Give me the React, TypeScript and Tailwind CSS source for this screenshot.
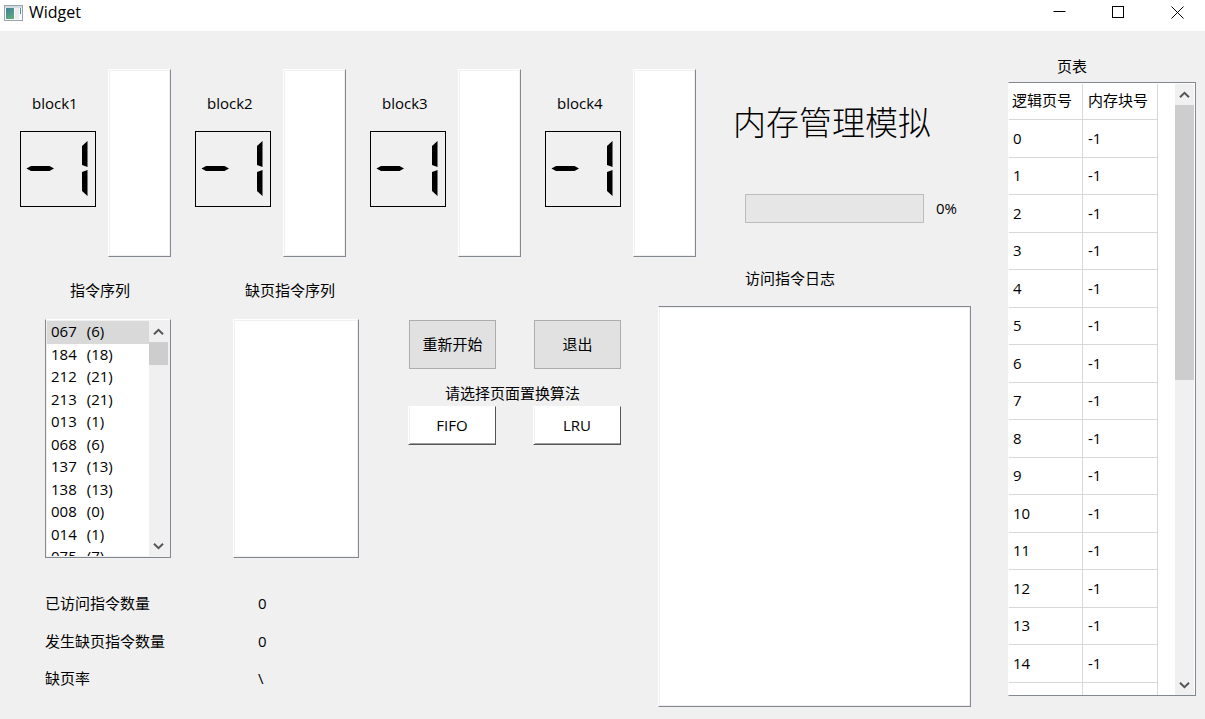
import React from "react";

const instructions: [string, string][] = [
  ["067", "(6)"],
  ["184", "(18)"],
  ["212", "(21)"],
  ["213", "(21)"],
  ["013", "(1)"],
  ["068", "(6)"],
  ["137", "(13)"],
  ["138", "(13)"],
  ["008", "(0)"],
  ["014", "(1)"],
  ["075", "(7)"],
];

const pages = Array.from({ length: 15 }, (_, page) => ({ page, block: -1 }));

const stats = [
  { label: "已访问指令数量", value: "0", row: "h-[38px]" },
  { label: "发生缺页指令数量", value: "0", row: "h-[37px]" },
  { label: "缺页率", value: "\\", row: "h-9" },
];

function Chevron({ up = false }: { up?: boolean }) {
  return (
    <svg width="11" height="8" viewBox="0 0 11 8" fill="none" stroke="#555" strokeWidth="2" aria-hidden="true">
      <path d={up ? "M1 6.2 5.5 1.8 10 6.2" : "M1 1.8 5.5 6.2 10 1.8"} />
    </svg>
  );
}

function ScrollBar({ thumb }: { thumb: string }) {
  return (
    <div className="flex w-[19px] shrink-0 flex-col bg-[#f0f0f0]">
      <button type="button" aria-label="向上滚动" className="flex h-[21px] items-center justify-center">
        <Chevron up />
      </button>
      <div className="flex-1">
        <div className={`bg-[#cdcdcd] ${thumb}`} />
      </div>
      <button type="button" aria-label="向下滚动" className="flex h-[21px] items-center justify-center">
        <Chevron />
      </button>
    </div>
  );
}

function EmptyList({ label, size }: { label: string; size: string }) {
  return (
    <div className={`border border-b-[#828790] border-l-white border-r-[#828790] border-t-white ${size}`}>
      <ul aria-label={label} className="h-full border border-[#f0f0f0] bg-white" />
    </div>
  );
}

function Lcd() {
  return (
    <svg width="76" height="76" viewBox="0 0 76 76" role="img" aria-label="-1">
      <rect x="0.5" y="0.5" width="75" height="75" fill="none" stroke="#000" />
      <path d="M6.5 37.5 11 35h18.500l4.500 2.500-4.500 2.500H11z" />
      <path d="M62 15 67.500 10v26L62 34z" />
      <path d="M62 41 67.500 39v26L62 60z" />
      <path d="M67.500 10.500v25M67.500 39.500v25" stroke="#777" />
    </svg>
  );
}

function Block({ index }: { index: number }) {
  return (
    <section className="flex shrink-0 gap-3">
      <div className="w-[76px] pt-6">
        <h2 className="mb-[17px] pl-3 leading-[21px]">block{index}</h2>
        <Lcd />
      </div>
      <EmptyList label={`block${index}`} size="h-[188px] w-[63px]" />
    </section>
  );
}

const toolButton = "h-[49px] flex-1 border border-[#adadad] bg-[#e1e1e1]";
const choiceButton =
  "h-[39px] flex-1 border border-b-[#555] border-l-white border-r-[#555] border-t-white bg-white shadow-[inset_1px_0_0_#f0f0f0,inset_0_-1px_0_#a0a0a0]";

export default function App() {
  return (
    <div className="flex h-screen min-h-[719px] min-w-[1180px] flex-col bg-[#f0f0f0] font-['Open_Sans','Noto_Sans_CJK_SC',sans-serif] text-[15px] leading-[21px] text-black">
      <header className="flex h-[31px] shrink-0 justify-between bg-white">
        <div className="flex items-center gap-[6px] pb-[6px] pl-1">
          <svg width="19" height="16" viewBox="0 0 19 16" aria-hidden="true">
            <defs>
              <linearGradient id="pane" x1="0" y1="0" x2="0.6" y2="1">
                <stop offset="0" stopColor="#3f7f9f" />
                <stop offset="1" stopColor="#5cab78" />
              </linearGradient>
            </defs>
            <rect x="0.5" y="0.5" width="18" height="15" fill="#fbfbfb" stroke="#9aa3aa" />
            <rect x="1" y="1" width="17" height="2" fill="#d5dbe2" />
            <rect x="2" y="3" width="8" height="11" fill="url(#pane)" />
            <rect x="11" y="3" width="4" height="11" fill="#ececf0" />
            <rect x="16" y="3" width="1" height="6" fill="#4795a0" />
          </svg>
          <h1 className="text-base leading-[21px]">Widget</h1>
        </div>
        <div className="flex h-6 items-center gap-10 pr-[18px]">
          <button type="button" aria-label="最小化" className="flex size-[19px] items-center justify-center">
            <svg width="13" height="13" viewBox="0 0 13 13" stroke="#000" fill="none"><path d="M0.500 5.500h12" /></svg>
          </button>
          <button type="button" aria-label="最大化" className="flex size-[19px] items-center justify-center">
            <svg width="13" height="13" viewBox="0 0 13 13" stroke="#000" fill="none"><rect x="0.500" y="0.500" width="11" height="11" /></svg>
          </button>
          <button type="button" aria-label="关闭" className="flex size-[19px] items-center justify-center">
            <svg width="13" height="13" viewBox="0 0 13 13" stroke="#000" fill="none"><path d="M0.500 0.500 12.500 12.500M12.500 0.500 0.500 12.500" /></svg>
          </button>
        </div>
      </header>

      <main className="flex min-h-0 flex-1 gap-[37px] pr-[9px]">
        <div className="flex min-w-0 flex-1 flex-col pb-3">
          <div className="flex pl-5 pt-[38px]">
            <div className="flex gap-6">
              {[1, 2, 3, 4].map((index) => (
                <Block key={index} index={index} />
              ))}
            </div>
            <div className="flex-1 pl-[37px] pt-8">
              <p className="text-[33px] font-light leading-[44px]">内存管理模拟</p>
              <div className="flex items-center gap-3 pl-3 pr-[14px] pt-[49px]">
                <progress
                  aria-label="进度"
                  value={0}
                  max={100}
                  className="h-[29px] min-w-0 flex-1 appearance-none border border-[#bcbcbc] bg-[#e6e6e6] [&::-webkit-progress-bar]:bg-[#e6e6e6] [&::-webkit-progress-value]:bg-[#06b025]"
                />
                <span>0%</span>
              </div>
            </div>
          </div>

          <div className="flex min-h-0 flex-1 pl-[45px]">
            <div>
              <div className="flex gap-[62px] pt-[23px]">
                <section className="w-[126px]">
                  <h2 className="mb-[18px] pl-[25px]">指令序列</h2>
                  <div className="flex h-[239px] border border-b-[#828790] border-l-[#828790] border-r-[#828790] border-t-white bg-[#f0f0f0] p-px pr-[2px]">
                    <ul role="listbox" aria-label="指令序列" className="h-full flex-1 overflow-hidden bg-white">
                      {instructions.map(([address, page], i) => (
                        <li
                          key={address}
                          role="option"
                          aria-selected={i === 0}
                          className="flex gap-[10px] pl-1 leading-[21px] odd:h-[23px] even:h-[22px] aria-selected:bg-[#d9d9d9]"
                        >
                          <span>{address}</span>
                          <span>{page}</span>
                        </li>
                      ))}
                    </ul>
                    <ScrollBar thumb="h-[23px]" />
                  </div>
                </section>
                <section className="w-[126px]">
                  <h2 className="mb-[18px] pl-3">缺页指令序列</h2>
                  <EmptyList label="缺页指令序列" size="h-[239px] w-full" />
                </section>
              </div>
              <dl className="pt-[35px]">
                {stats.map(({ label, value, row }) => (
                  <div key={label} className={`flex ${row}`}>
                    <dt className="w-[213px]">{label}</dt>
                    <dd>{value}</dd>
                  </div>
                ))}
              </dl>
            </div>

            <div className="ml-[49px] w-[213px] shrink-0 pt-[63px]">
              <div className="flex gap-[38px] pl-px">
                <button type="button" className={toolButton}>重新开始</button>
                <button type="button" className={toolButton}>退出</button>
              </div>
              <p className="pb-[2px] pl-[37px] pt-[14px]">请选择页面置换算法</p>
              <div className="flex gap-[37px]">
                <button type="button" className={choiceButton}>FIFO</button>
                <button type="button" className={choiceButton}>LRU</button>
              </div>
            </div>

            <div className="ml-[37px] flex flex-1 flex-col pt-[11px]">
              <label htmlFor="log" className="mb-[17px] pl-[87px]">访问指令日志</label>
              <textarea
                id="log"
                readOnly
                className="w-full flex-1 resize-none border border-b-[#828790] border-l-white border-r-[#828790] border-t-[#828790] bg-white shadow-[inset_0_0_0_1px_#f0f0f0]"
              />
            </div>
          </div>
        </div>

        <section className="flex w-[188px] shrink-0 flex-col pb-[23px] pt-[25px]">
          <h2 className="mb-[5px] pl-[49px]">页表</h2>
          <div className="flex min-h-0 flex-1 border border-b-[#828790] border-l-white border-r-[#828790] border-t-[#828790] bg-white pr-px pt-px">
            <div className="min-w-0 flex-1 overflow-hidden pb-px">
              <table className="w-[149px] table-fixed border-separate border-spacing-0" aria-label="页表">
                <thead>
                  <tr className="h-9">
                    <th scope="col" className="w-[74px] whitespace-nowrap border-b border-r border-[#d8d8d8] p-0 pb-[2px] pl-[3px] text-left font-normal">逻辑页号</th>
                    <th scope="col" className="whitespace-nowrap border-b border-r border-[#d8d8d8] p-0 pb-[2px] pl-[5px] text-left font-normal">内存块号</th>
                  </tr>
                </thead>
                <tbody>
                  {pages.map(({ page, block }) => (
                    <tr key={page} className="group odd:h-[38px] even:h-[37px]">
                      <td className="border-b border-r border-[#d8d8d8] p-0 pl-1 group-even:pb-px">{page}</td>
                      <td className="border-b border-r border-[#d8d8d8] p-0 pl-[5px] group-even:pb-px">{block}</td>
                    </tr>
                  ))}
                  <tr className="h-[37px]">
                    <td className="border-b border-r border-[#d8d8d8] p-0" />
                    <td className="border-b border-r border-[#d8d8d8] p-0" />
                  </tr>
                </tbody>
              </table>
            </div>
            <ScrollBar thumb="h-[275px]" />
          </div>
        </section>
      </main>
    </div>
  );
}
